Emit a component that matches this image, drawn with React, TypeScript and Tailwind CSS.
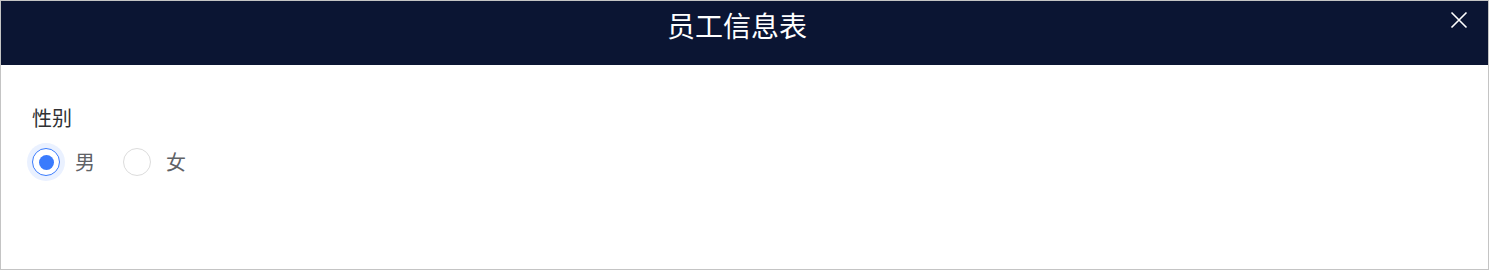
import React, { useState } from "react";

export default function App() {
  const [sex, setSex] = useState("male");
  const options = [
    { v: "male", label: "男" },
    { v: "female", label: "女" },
  ];
  return (
    <div
      className="w-full h-[270px] border border-[#c4c4c4] bg-white flex flex-col"
      style={{ fontFamily: '"Noto Sans CJK SC", "Noto Sans", sans-serif' }}
    >
      <div className="relative h-[64px] bg-[#0b1533] flex justify-center pr-[15px]">
        <div className="text-white text-[28px] leading-[48px]">员工信息表</div>
        <button className="absolute right-[20px] top-[10px] w-[18px] h-[18px] flex items-center justify-center">
          <svg width="18" height="18" viewBox="0 0 18 18" fill="none" stroke="white" strokeWidth="1.6">
            <path d="M1.5 1.5 L16.5 16.5 M16.5 1.5 L1.5 16.5" />
          </svg>
        </button>
      </div>
      <div className="px-[31px] pt-[38px]">
        <div className="text-[20px] leading-[30px] text-[#303133]">性别</div>
        <div className="flex items-center gap-[28px] mt-[14px]">
          {options.map((o) => {
            const on = sex === o.v;
            return (
              <label key={o.v} className="flex items-center gap-[15px] cursor-pointer" onClick={() => setSex(o.v)}>
                <span
                  className={
                    on
                      ? "w-[28px] h-[28px] rounded-full border border-[#3a7bfd] bg-white flex items-center justify-center shadow-[0_0_0_5px_#eaf1ff]"
                      : "w-[28px] h-[28px] rounded-full border border-[#dcdcdc] bg-white"
                  }
                >
                  {on && <span className="w-[15px] h-[15px] rounded-full bg-[#3a7bfd]" />}
                </span>
                <span className="text-[20px] leading-[30px] text-[#606266]">{o.label}</span>
              </label>
            );
          })}
        </div>
      </div>
    </div>
  );
}
